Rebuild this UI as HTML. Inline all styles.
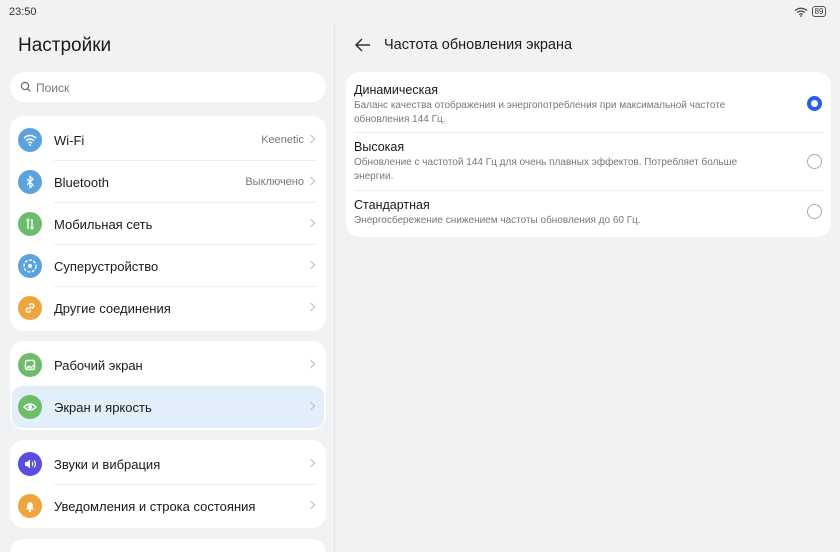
<!DOCTYPE html>
<html><head><meta charset="utf-8"><style>
*{margin:0;padding:0;box-sizing:border-box}
html,body{width:840px;height:552px;overflow:hidden}
body{background:#f1f2f4;font-family:"Liberation Sans",sans-serif;position:relative;color:#1a1a1a}
.a{position:absolute}
.card{position:absolute;background:#fff;border-radius:14px}
.row{position:absolute;left:0;width:316px;height:42px}
.ic{position:absolute;left:8px;top:9px;width:24px;height:24px;border-radius:50%}
.ic svg{position:absolute;left:0;top:0}
.lb{position:absolute;left:44px;top:14px;font-size:13px;color:#1a1a1a}
.chev{position:absolute;right:12px;top:17px;width:6px;height:6px;border-top:1.2px solid #bbb;border-right:1.2px solid #bbb;transform:rotate(45deg)}
.val{position:absolute;right:22px;top:15px;font-size:11px;color:#777}
.sep{position:absolute;left:44px;right:10px;bottom:0;height:1px;background:#ececec}
.t{position:absolute;left:8px;font-size:12.5px;color:#1a1a1a}
.d{position:absolute;left:8px;font-size:10px;color:#777;line-height:14px;width:420px}
.rad{position:absolute;left:461px;width:15px;height:15px;border-radius:50%;border:1px solid #aaa}
</style></head><body>
<div class="a" style="left:9px;top:6px;font-size:11px;color:#333">23:50</div>
<div class="a" style="left:794px;top:6px;font-size:9px;color:#333">
<svg width="14" height="10" viewBox="0 0 14 10" style="vertical-align:middle"><path d="M1 3.5Q7-1 13 3.5M3 5.5Q7 2.5 11 5.5M5 7.5Q7 6 9 7.5" fill="none" stroke="#444" stroke-width="1.2"/><circle cx="7" cy="9" r="0.9" fill="#444"/></svg>
<span style="display:inline-block;border:1px solid #555;border-radius:3px;padding:0 2px;font-size:8px;line-height:9px;margin-left:1px">89</span></div>
<div class="a" style="left:334px;top:24px;width:1px;height:528px;background:#e4e4e6"></div>
<div class="a" style="left:18px;top:35px;font-size:19px">Настройки</div>
<div class="card" style="left:10px;top:72px;width:316px;height:30px;border-radius:15px">
<svg class="a" style="left:10px;top:9px" width="12" height="12" viewBox="0 0 12 12"><circle cx="5" cy="5" r="3.6" fill="none" stroke="#666" stroke-width="1.2"/><path d="M7.7 7.7L10.5 10.5" stroke="#666" stroke-width="1.2"/></svg>
<div class="a" style="left:26px;top:9px;font-size:12px;color:#777">Поиск</div></div>

<div class="card" style="left:10px;top:116px;width:316px;height:215px">
<div class="row" style="top:3px"><div class="ic" style="background:#5ba3de"><svg width="24" height="24" viewBox="0 0 24 24"><path d="M6 10Q12 5 18 10M8 12.5Q12 9.5 16 12.5M10 15Q12 13.5 14 15" fill="none" stroke="#fff" stroke-width="1.5"/><circle cx="12" cy="17" r="1" fill="#fff"/></svg></div><div class="lb">Wi-Fi</div><div class="val">Keenetic</div><div class="chev"></div><div class="sep"></div></div>
<div class="row" style="top:45px"><div class="ic" style="background:#5ba3de"><svg width="24" height="24" viewBox="0 0 24 24"><path d="M9 9l6 6-3 2.5V6.5L15 9l-6 6" fill="none" stroke="#fff" stroke-width="1.3"/></svg></div><div class="lb">Bluetooth</div><div class="val">Выключено</div><div class="chev"></div><div class="sep"></div></div>
<div class="row" style="top:87px"><div class="ic" style="background:#6bbd6a"><svg width="24" height="24" viewBox="0 0 24 24"><path d="M10 7v10M14 7v10M8.5 9L10 7l1.5 2M12.5 15l1.5 2 1.5-2" fill="none" stroke="#fff" stroke-width="1.4"/></svg></div><div class="lb">Мобильная сеть</div><div class="chev"></div><div class="sep"></div></div>
<div class="row" style="top:129px"><div class="ic" style="background:#5ba3de"><svg width="24" height="24" viewBox="0 0 24 24"><circle cx="12" cy="12" r="6" fill="none" stroke="#fff" stroke-width="1.3" stroke-dasharray="3 1.5"/><circle cx="12" cy="12" r="2" fill="#fff"/></svg></div><div class="lb">Суперустройство</div><div class="chev"></div><div class="sep"></div></div>
<div class="row" style="top:171px"><div class="ic" style="background:#f0a53c"><svg width="24" height="24" viewBox="0 0 24 24"><path d="M10.5 13.5l3-3M11 9.5l1.5-1.5a2.2 2.2 0 013 3L14 12.5M13 14.5l-1.5 1.5a2.2 2.2 0 01-3-3L10 11.5" fill="none" stroke="#fff" stroke-width="1.4"/></svg></div><div class="lb">Другие соединения</div><div class="chev"></div></div>
</div>
<div class="card" style="left:10px;top:341px;width:316px;height:89px">
<div class="row" style="top:3px"><div class="ic" style="background:#6bbd6a"><svg width="24" height="24" viewBox="0 0 24 24"><rect x="7.5" y="7.5" width="9" height="9" rx="1.5" fill="none" stroke="#fff" stroke-width="1.4"/><path d="M8 16l3-3 2 2 3-3" fill="#fff" stroke="#fff"/></svg></div><div class="lb">Рабочий экран</div><div class="chev"></div></div>
<div class="a" style="left:2px;top:45px;width:312px;height:42px;background:#e3eefb;border-radius:10px"></div>
<div class="row" style="top:45px"><div class="ic" style="background:#6bbd6a"><svg width="24" height="24" viewBox="0 0 24 24"><path d="M6 12Q12 6 18 12Q12 18 6 12Z" fill="none" stroke="#fff" stroke-width="1.4"/><circle cx="12" cy="12" r="2" fill="#fff"/></svg></div><div class="lb">Экран и яркость</div><div class="chev"></div></div>
</div>
<div class="card" style="left:10px;top:440px;width:316px;height:88px">
<div class="row" style="top:3px"><div class="ic" style="background:#5a4de0"><svg width="24" height="24" viewBox="0 0 24 24"><path d="M7 10h2l3-2.5v9L9 14H7z" fill="#fff"/><path d="M14 10q1.5 2 0 4M16 8.5q3 3.5 0 7" fill="none" stroke="#fff" stroke-width="1.2"/></svg></div><div class="lb">Звуки и вибрация</div><div class="chev"></div><div class="sep"></div></div>
<div class="row" style="top:45px"><div class="ic" style="background:#f0a53c"><svg width="24" height="24" viewBox="0 0 24 24"><path d="M8 15.5h8l-1.2-1.8V11a2.8 2.8 0 00-5.6 0v2.7z" fill="#fff"/><circle cx="12" cy="17" r="1.2" fill="#fff"/></svg></div><div class="lb">Уведомления и строка состояния</div><div class="chev"></div></div>
</div>
<div class="card" style="left:10px;top:539px;width:316px;height:30px"></div>

<svg class="a" style="left:354px;top:37px" width="18" height="16" viewBox="0 0 18 16"><path d="M16 8H2M8 2L2 8l6 6" fill="none" stroke="#333" stroke-width="1.5"/></svg>
<div class="a" style="left:384px;top:37px;font-size:14.5px">Частота обновления экрана</div>
<div class="card" style="left:346px;top:72px;width:485px;height:165px">
<div class="t" style="top:11px">Динамическая</div>
<div class="d" style="top:27px">Баланс качества отображения и энергопотребления при максимальной частоте обновления 144 Гц.</div>
<div class="rad" style="top:24px;border:4px solid #2a5ee8"></div>
<div class="a" style="left:8px;right:8px;top:60px;height:1px;background:#ececec"></div>
<div class="t" style="top:68px">Высокая</div>
<div class="d" style="top:84px">Обновление с частотой 144 Гц для очень плавных эффектов. Потребляет больше энергии.</div>
<div class="rad" style="top:82px"></div>
<div class="a" style="left:8px;right:8px;top:118px;height:1px;background:#ececec"></div>
<div class="t" style="top:126px">Стандартная</div>
<div class="d" style="top:142px">Энергосбережение снижением частоты обновления до 60 Гц.</div>
<div class="rad" style="top:132px"></div>
</div>
</body></html>
